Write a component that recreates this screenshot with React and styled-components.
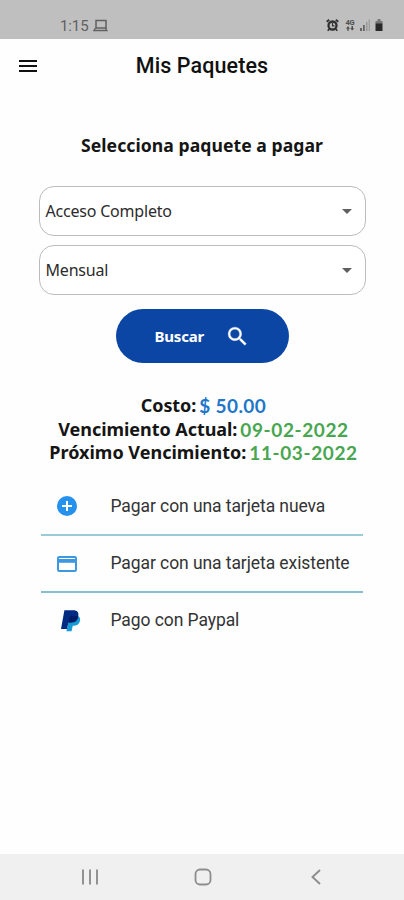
import React, { useState } from 'react'
import styled, { createGlobalStyle } from 'styled-components'

const GlobalStyle = createGlobalStyle`
    *{
        box-sizing:border-box;
    }
    body{
        margin:0;
        background-color:#fefefe;
        font-family:"Noto Sans","Open Sans",sans-serif;
    }
    h1,h2,p{
        margin:0;
    }
`;

const Screen = styled.div`
    width:404px;
    height:900px;
    display:flex;
    flex-direction:column;
    color:#151515;
    overflow:hidden;
`;

const StatusBar = styled.div`
    height:39px;
    flex:none;
    display:flex;
    justify-content:space-between;
    align-items:flex-start;
    padding:17px 20px 0 60px;
    background-color:#bfbfbf;
    font-family:Roboto,sans-serif;
    font-size:15px;
    line-height:18px;
    letter-spacing:-0.1px;
    color:#606060;
    .left{
        display:flex;
        gap:4px;
    }
    .left svg{
        margin-top:2px;
    }
    svg{
        display:block;
    }
`;

const Header = styled.header`
    height:54px;
    flex:none;
    display:grid;
    grid-template-columns:56px 1fr 56px;
    align-items:center;
    text-align:center;
    svg{
        display:block;
        margin-left:19px;
    }
`;

const Title = styled.h1`
    font-family:Roboto,sans-serif;
    font-size:21.5px;
    font-weight:500;
    line-height:28px;
    letter-spacing:0.1px;
    color:#111;
`;

const Content = styled.main`
    flex:1;
    display:flex;
    flex-direction:column;
    align-items:center;
`;

const Heading = styled.h2`
    margin-top:39px;
    font-size:17.6px;
    font-weight:700;
    line-height:26px;
    letter-spacing:0.05px;
`;

const Fields = styled.div`
    width:327px;
    margin-top:28px;
    display:flex;
    flex-direction:column;
    gap:9px;
`;

const Select = styled.button`
    height:50px;
    display:flex;
    align-items:center;
    justify-content:space-between;
    padding:0 13px 0 6px;
    border:1.5px solid #bcbcbc;
    border-radius:15px;
    background-color:#fff;
    font-family:inherit;
    font-size:16px;
    letter-spacing:${(props) => props.$spacing}px;
    color:#2b2b2b;
`;

const SearchButton = styled.button`
    width:173px;
    height:54px;
    margin-top:14px;
    padding:0 0 0 39px;
    display:flex;
    align-items:center;
    gap:21px;
    border:none;
    border-radius:27px;
    background-color:#0b46a5;
    color:#fff;
    font-family:inherit;
    font-size:15px;
    font-weight:700;
    letter-spacing:-0.2px;
`;

const Summary = styled.div`
    margin-top:31px;
    padding-left:3px;
    display:flex;
    flex-direction:column;
    align-items:center;
`;

const SummaryLine = styled.p`
    display:flex;
    gap:3px;
    font-size:18px;
    font-weight:700;
    line-height:23.7px;
    letter-spacing:${(props) => props.$spacing}px;
    white-space:pre;
`;

const Value = styled.span`
    font-family:Lato,sans-serif;
    font-size:19px;
    color:${(props) => props.$color};
    letter-spacing:${(props) => props.$spacing}px;
`;

const Options = styled.div`
    width:322px;
    margin-top:13px;
`;

const Option = styled.div`
    height:${(props) => props.$height}px;
    display:flex;
    align-items:center;
    border-bottom:${(props) => props.$line ? `2px solid ${props.$line}` : "none"};
    font-family:Roboto,sans-serif;
    font-size:17.5px;
    letter-spacing:-0.08px;
    color:#333;
    .icon{
        width:69.5px;
        padding-left:${(props) => props.$inset || 15}px;
        flex:none;
    }
    svg{
        display:block;
    }
    span{
        white-space:nowrap;
        margin-top:-1px;
    }
`;

const NavBar = styled.nav`
    height:46px;
    flex:none;
    display:flex;
    align-items:center;
    justify-content:space-between;
    padding:0 81px 0 81px;
    background-color:#f0f0f0;
    .home{
        margin-right:2px;
    }
`;

const StatusIcons = () => (
    <svg width="59" height="17" viewBox="0 0 59 17">
        <g fill="none" stroke="#303030" strokeWidth="2.3">
            <circle cx="7.5" cy="8.5" r="4" />
            <path d="M7.5 6v2.8h2" strokeWidth="1.2" />
            <path d="M1.7 4.8l2.5-2M13.3 4.8l-2.5-2" strokeWidth="1.8" />
            <path d="M4.3 12l-1.6 1.8M10.7 12l1.6 1.8" strokeWidth="1.7" />
        </g>
        <text x="20.5" y="7.6" fontSize="7.5" fontWeight="700" letterSpacing="-.3" fill="#505050">4G</text>
        <path d="M21 11.5l2-2.2 2 2.2h-1.3v2.3h-1.4v-2.3zM25.2 11.3l2 2.2 2-2.2h-1.3V9h-1.4v2.3z" fill="#484848" />
        <path d="M35 11h2v3h-2zM38 8h1.8v6H38z" fill="#666" />
        <path d="M41 5h1.5v9H41zM43.6 2.5h1.2V14h-1.2z" fill="#999" />
        <path d="M52.5 2h3v2h-3z" fill="#777" />
        <path d="M50.5 4h7v3h-7z" fill="#777" />
        <path d="M50.5 6.5h7V14h-7z" fill="#292929" />
    </svg>
);

const PaypalIcon = () => (
    <svg width="24" height="24" viewBox="0 0 24 24">
        <path d="M19.3 7.3c2 1 2.2 3.2 1.5 5.2-.9 3-3.2 4.3-6.1 4.3h-1l-1.1 5.4H7.4L10.4 8z" fill="#179bd7" />
        <path d="M5.4 1.2h8.8c4 0 5.8 2 5.1 6.1-.7 4.5-3.3 6.1-7.2 6.1H9.4L7.9 20H2z" fill="#002b83" />
        <path d="M10.8 7.2h5.8c1 0 1.9.1 2.6.5-.8 4.1-3.4 5.7-7.1 5.7H9.5z" fill="#001c64" />
    </svg>
);

const packages = ["Acceso Completo", "Mensual"];

const App = () => {
    const [option, setOption] = useState("");

    return (
        <Screen data-option={option}>
            <GlobalStyle />
            <StatusBar>
                <div className="left">
                    <span>1:15</span>
                    <svg width="15" height="14" viewBox="0 0 15 14">
                        <path d="M3 9V1.5h10V9z" fill="none" stroke="#606060" strokeWidth="1.5" />
                        <path d="M2.5 9L.9 11.5h13L12.5 9" fill="none" stroke="#606060" strokeWidth="1.3" />
                    </svg>
                </div>
                <StatusIcons />
            </StatusBar>
            <Header>
                <svg width="18" height="14" viewBox="0 0 18 14">
                    <path d="M0 2h18M0 7h18M0 12h18" stroke="#111" strokeWidth="2" />
                </svg>
                <Title>Mis Paquetes</Title>
            </Header>

            <Content>
                <Heading>Selecciona paquete a pagar</Heading>
                <Fields>
                    {packages.map((val) => (
                        <Select key={val} $spacing={-0.2}>
                            <span>{val}</span>
                            <svg width="10" height="5" viewBox="0 0 10 5">
                                <path d="M0 0h10L5 5z" fill="#5f5f5f" />
                            </svg>
                        </Select>
                    ))}
                </Fields>
                <SearchButton>
                    Buscar
                    <svg width="25" height="25" viewBox="0 0 24 24">
                        <path fill="#fff" stroke="#fff" strokeWidth="0.3" d="M15.5 14h-.79l-.28-.27A6.47 6.47 0 0 0 16 9.5 6.5 6.5 0 1 0 9.5 16c1.61 0 3.09-.59 4.23-1.57l.27.28v.79l5 4.99L20.49 19zm-6 0C7.01 14 5 11.99 5 9.5S7.01 5 9.5 5 14 7.01 14 9.5 11.99 14 9.5 14" />
                    </svg>
                </SearchButton>

                <Summary>
                    <SummaryLine $spacing={-0.1}>
                        Costo:<Value $color="#2176c9" $spacing={0.4}>$ 50.00</Value>
                    </SummaryLine>
                    <SummaryLine $spacing={-0.05}>
                        Vencimiento Actual:<Value $color="#48a651" $spacing={0.6}>09-02-2022</Value>
                    </SummaryLine>
                    <SummaryLine $spacing={0}>
                        Próximo Vencimiento:<Value $color="#48a651" $spacing={0.6}>11-03-2022</Value>
                    </SummaryLine>
                </Summary>

                <Options>
                    <Option $height={58} $line="#9accd5" onClick={() => setOption("nueva")}>
                        <div className="icon">
                            <svg width="22" height="22" viewBox="0 0 22 22">
                                <circle cx="11" cy="11" r="10" fill="#2491ed" />
                                <path d="M11 6v10M6 11h10" stroke="#fff" strokeWidth="2" />
                            </svg>
                        </div>
                        <span>Pagar con una tarjeta nueva</span>
                    </Option>
                    <Option $height={57} $line="#86bfd2" onClick={() => setOption("existente")}>
                        <div className="icon">
                            <svg width="22" height="18" viewBox="0 0 22 18">
                                <rect x="2" y="2" width="18" height="14" rx="1.2" fill="#fff" stroke="#3d98e0" strokeWidth="2" />
                                <path d="M2 4h18v3.8H2z" fill="#3d98e0" />
                            </svg>
                        </div>
                        <span>Pagar con una tarjeta existente</span>
                    </Option>
                    <Option $height={55} $inset={18} onClick={() => setOption("paypal")}>
                        <div className="icon"><PaypalIcon /></div>
                        <span>Pago con Paypal</span>
                    </Option>
                </Options>
            </Content>

            <NavBar>
                <svg width="18" height="18" viewBox="0 0 18 18">
                    <path d="M2 1.5v15M9 1.5v15M16 1.5v15" stroke="#929292" strokeWidth="2" />
                </svg>
                <svg className="home" width="18" height="18" viewBox="0 0 18 18">
                    <rect x="1.5" y="1.5" width="15" height="15" rx="4.5" fill="none" stroke="#8d8d8d" strokeWidth="1.8" />
                </svg>
                <svg width="14" height="18" viewBox="0 0 14 18">
                    <path d="M11 2L3.5 9l7.5 7" fill="none" stroke="#8d8d8d" strokeWidth="1.9" />
                </svg>
            </NavBar>
        </Screen>
    );
};

export default App
